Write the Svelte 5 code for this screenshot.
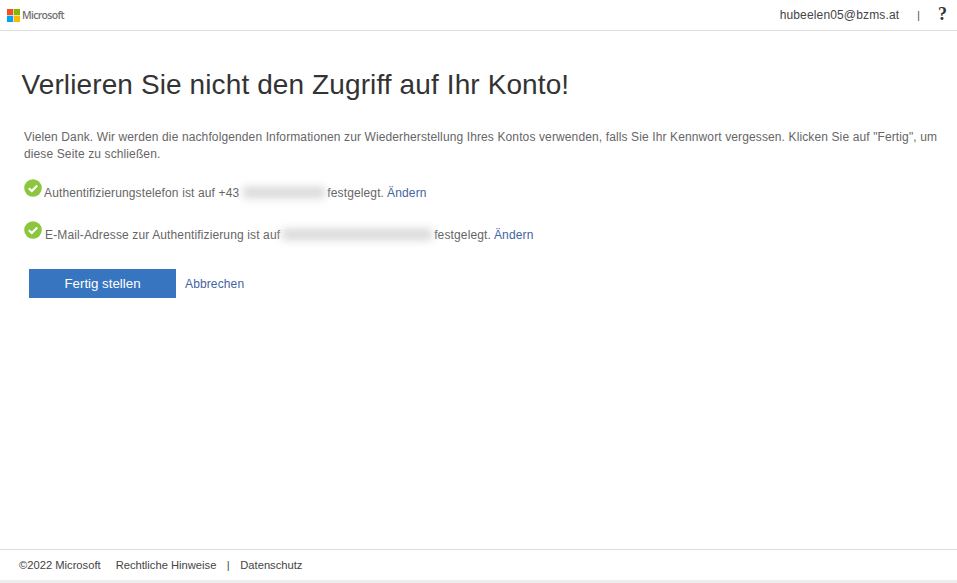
<script>
  const rows = [
    { text: 'Authentifizierungstelefon ist auf +43', blur: 82, cls: 'first' },
    { text: 'E-Mail-Adresse zur Authentifizierung ist auf', blur: 150, cls: 'second' }
  ];
</script>

<div class="page">
  <header class="top">
    <div class="logo">
      <svg class="mark" width="13" height="13" viewBox="0 0 13 13">
        <rect x="0" y="0" width="6.2" height="6.2" fill="#f25022" />
        <rect x="6.8" y="0" width="6.2" height="6.2" fill="#7fba00" />
        <rect x="0" y="6.8" width="6.2" height="6.2" fill="#00a4ef" />
        <rect x="6.8" y="6.8" width="6.2" height="6.2" fill="#ffb900" />
      </svg>
      <span class="brand">Microsoft</span>
    </div>
    <div class="account">
      <span class="mail">hubeelen05@bzms.at</span>
      <span class="sep">|</span>
      <span class="help">?</span>
    </div>
  </header>

  <main class="content">
    <h1>Verlieren Sie nicht den Zugriff auf Ihr Konto!</h1>
    <p class="intro">Vielen Dank. Wir werden die nachfolgenden Informationen zur Wiederherstellung Ihres Kontos verwenden, falls Sie Ihr Kennwort vergessen. Klicken Sie auf "Fertig", um diese Seite zu schließen.</p>

    {#each rows as row}
      <div class="row {row.cls}">
        <svg class="check" width="18" height="18" viewBox="0 0 18 18">
          <circle cx="9" cy="9" r="8.8" fill="#8cc63f" />
          <path d="M4.8 9.2 L7.8 12 L13.2 6.4" fill="none" stroke="#fff" stroke-width="2.2" />
        </svg>
        <span class="label">{row.text}</span>
        <span class="blurred" style="width: {row.blur}px"></span>
        <span class="label">festgelegt.</span>
        <a href="#top" class="link">Ändern</a>
      </div>
    {/each}

    <div class="actions">
      <button type="button" class="primary">Fertig stellen</button>
      <a href="#top" class="link">Abbrechen</a>
    </div>
  </main>

  <footer class="bottom">
    <span class="copy">©2022 Microsoft</span>
    <span>Rechtliche Hinweise</span>
    <span class="pipe">|</span>
    <span>Datenschutz</span>
  </footer>
</div>

<style>
  :global(body) {
    margin: 0;
    background: #fff;
  }
  .page {
    width: 957px;
    height: 583px;
    display: flex;
    flex-direction: column;
    font-family: "Liberation Sans", Arial, sans-serif;
    color: #666;
    overflow: hidden;
  }
  .top {
    height: 30px;
    flex: none;
    border-bottom: 1px solid #dcdcdc;
    display: flex;
    align-items: center;
    justify-content: space-between;
    padding: 0 9px 0 7px;
  }
  .logo {
    display: flex;
    align-items: center;
    gap: 2px;
  }
  .brand {
    font-family: "Open Sans", sans-serif;
    font-size: 10.5px;
    font-weight: 600;
    letter-spacing: -0.7px;
    color: #737373;
  }
  .account {
    display: flex;
    align-items: center;
    color: #444;
    font-size: 12px;
    letter-spacing: 0.15px;
  }
  .sep {
    margin-left: 18px;
    font-size: 10px;
  }
  .help {
    margin-left: 18px;
    width: 10px;
    font-family: "Liberation Serif", serif;
    font-weight: 700;
    font-size: 18px;
    line-height: 18px;
    color: #333;
    position: relative;
    top: -1px;
  }
  .content {
    flex: 1;
    padding: 0 16px 0 24px;
  }
  h1 {
    margin: 37px 0 0 -2.5px;
    font-size: 28px;
    line-height: 34px;
    font-weight: 400;
    letter-spacing: 0.11px;
    color: #333;
  }
  .intro {
    margin: 27px 0 0;
    font-size: 12px;
    line-height: 17px;
    letter-spacing: 0.12px;
  }
  .row {
    display: flex;
    align-items: flex-start;
    font-size: 12px;
    line-height: 14px;
    letter-spacing: 0.13px;
    white-space: pre;
  }
  .row.first {
    margin-top: 16px;
  }
  .row.second {
    margin-top: 21px;
  }
  .check {
    flex: none;
    margin-right: 2px;
  }
  .second .check {
    margin-right: 3px;
  }
  .label {
    margin-top: 7px;
  }
  .row .link {
    margin-top: 7px;
    margin-left: 3px;
  }
  .blurred {
    height: 11px;
    margin: 8px 2px 0 4px;
    background: #d8d8d8;
    filter: blur(4px);
    flex: none;
  }
  .second .blurred {
    margin-left: 2px;
    margin-top: 8px;
  }
  .link {
    color: #43649f;
    font-size: 12px;
    letter-spacing: 0.13px;
    text-decoration: none;
  }
  .actions {
    display: flex;
    align-items: center;
    gap: 9px;
    margin: 27px 0 0 5px;
  }
  .primary {
    width: 147px;
    height: 29px;
    background: #3775c1;
    border: 0;
    padding: 0;
    color: #fff;
    font-family: inherit;
    font-size: 13.3px;
  }
  .bottom {
    flex: none;
    height: 30px;
    margin-bottom: 3px;
    border-top: 1px solid #dcdcdc;
    display: flex;
    align-items: center;
    padding-left: 19px;
    font-size: 11.2px;
    color: #444;
    box-shadow: 0 3px 0 #eee;
  }
  .copy {
    margin-right: 15px;
  }
  .pipe {
    margin: 0 10.5px;
  }
</style>
